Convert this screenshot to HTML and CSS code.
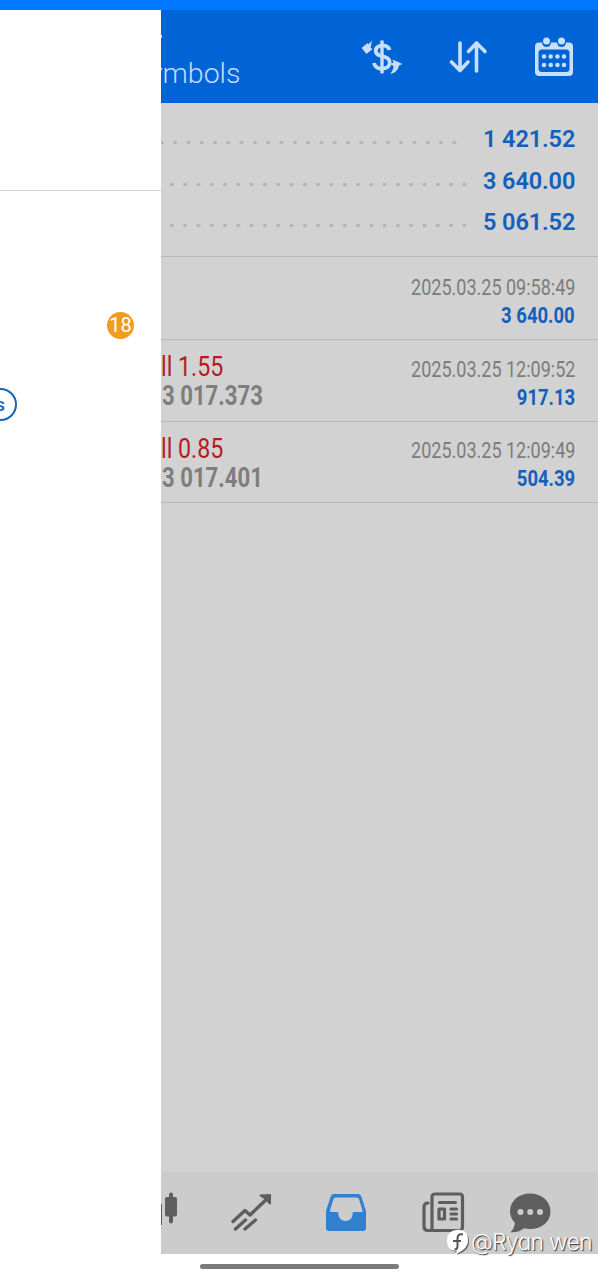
FILE: index.html
```html
<!DOCTYPE html>
<html lang="en">
<head>
<meta charset="utf-8">
<title>History</title>
<link rel="stylesheet" href="styles.css">
</head>
<body>
<div class="status"></div>
<div class="screen">
  <aside class="drawer">
    <div class="drawer-head"></div>
    <div class="drawer-item"><span class="count">18</span></div>
    <div class="drawer-item"><span class="pill">s</span></div>
  </aside>
  <main class="main">
    <header class="bar">
      <div class="title">ymbols</div>
      <div class="tick"></div>
      <svg class="tool" width="42" height="40" viewBox="0 0 42 40" fill="none" stroke="#c9def7" stroke-width="3.800">
        <path d="M28.500 13C27.500 9 23 7.500 19 8.800c-6 2-5.500 8.200 0 9.700l5 1.500c6.500 2 6 9.500 0 11.200-5 1.300-10-.2-11-5.200"/>
        <path d="M21 3.500v33" stroke-width="3.400"/>
        <path d="M0.500 11l6-5 .5 1.500L11.500 3.500C10 6 10.500 8 9.500 10.500l2 1.500-6 5zM41.500 27l-10-4.500 1 3-3 1.500 3 2c0 3-1 5-3.500 8 5-1 8-3.500 9-8.500z" fill="#c9def7" stroke="none"/>
      </svg>
      <svg class="tool" width="42" height="40" viewBox="0 0 42 40" fill="none" stroke="#c9def7" stroke-width="3.600" stroke-linecap="round" stroke-linejoin="round">
        <path d="M13 6v27M4.500 25l8.500 8.500 8-8.500M29.500 34V6M21.500 14.500L29.500 6l8.500 8.500"/>
      </svg>
      <svg class="tool" width="42" height="42" viewBox="0 0 42 42">
        <path d="M6 5.500h3c.5 3 2 4.500 4.500 4.500s4-1.500 4.500-4.500h6c.5 3 2 4.500 4.500 4.500s4-1.500 4.500-4.500h3q4 0 4 4v25.500q0 4-4 4H6q-4 0-4-4V9.500q0-4 4-4z" fill="#c9def7"/>
        <rect x="5.500" y="12.500" width="31" height="22.500" rx="3.500" fill="#0064d6"/>
        <g fill="#c9def7"><circle cx="13.500" cy="4" r="3.500"/><circle cx="28.500" cy="4" r="3.500"/>
        <circle cx="11" cy="19.500" r="2.300"/><circle cx="17.700" cy="19.500" r="2.300"/><circle cx="24.400" cy="19.500" r="2.300"/><circle cx="31" cy="19.500" r="2.300"/>
        <circle cx="11" cy="28" r="2.300"/><circle cx="17.700" cy="28" r="2.300"/><circle cx="24.400" cy="28" r="2.300"/><circle cx="31" cy="28" r="2.300"/></g>
      </svg>
    </header>
    <section class="totals">
      <div class="total"><i class="dots first"></i><b>1 421.52</b></div>
      <div class="total"><i class="dots second"></i><b>3 640.00</b></div>
      <div class="total"><i class="dots"></i><b>5 061.52</b></div>
    </section>
    <section class="deals">
      <article class="deal">
        <div class="left"></div>
        <div class="right"><span class="date">2025.03.25 09:58:49</span><span class="profit">3 640.00</span></div>
      </article>
      <article class="deal">
        <div class="left"><span class="side">ll 1.55</span><span class="price">3 017.373</span></div>
        <div class="right"><span class="date">2025.03.25 12:09:52</span><span class="profit">917.13</span></div>
      </article>
      <article class="deal">
        <div class="left"><span class="side">ll 0.85</span><span class="price">3 017.401</span></div>
        <div class="right"><span class="date">2025.03.25 12:09:49</span><span class="profit">504.39</span></div>
      </article>
    </section>
    <nav class="tabs">
      <svg class="candle" width="18" height="44" viewBox="0 0 18 44" fill="#5e5e5e">
        <path d="M0 14h1v21H0z"/><rect x="4" y="7" width="12" height="19.500" rx="2"/><rect x="8" y="2.500" width="4" height="31" rx="2"/>
      </svg>
      <svg class="trend" width="44" height="44" viewBox="0 0 44 44" fill="none" stroke="#5e5e5e" stroke-width="3.400" stroke-linecap="round" stroke-linejoin="round">
        <path d="M4 31.500L16 20.500l5 4.500L40.500 6.500M6.500 39L16.500 30M16 39l10.500-9"/><path d="M31.500 5.500l9.500-.5v8.500L37 9z" stroke-width="2" fill="#5e5e5e"/>
      </svg>
      <svg class="inbox" width="44" height="44" viewBox="0 0 44 44">
        <path d="M10 4h24q2.500 0 3.500 3l4.500 14v17q0 3-3 3H5q-3 0-3-3V21L6.500 7q1-3 3.500-3z" fill="#3280d0"/>
        <path d="M12 7.500h20.500q2 0 2.500 1.500l3.500 11.500q.500 1.500-1 1.500h-7.500q-1.500 0-1.500 2c0 4-3 7-7 7s-7-3-7-7q0-2-1.500-2H7q-1.500 0-1-1.500L9.500 9q.500-1.500 2.500-1.500z" fill="#ccc"/>
      </svg>
      <svg class="news" width="44" height="44" viewBox="0 0 44 44" fill="none" stroke="#5e5e5e" stroke-width="3.200" stroke-linecap="round" stroke-linejoin="round">
        <path d="M11 40.500h27q3.500 0 3.500-3.500V7q0-3-3-3H14q-3 0-3 3v33.500H7q-4 0-4-4V17q0-4 4-4"/><path d="M18.500 12.500h16M30 19h5.500M30 24h5.500M30 29h5.500"/><rect x="18" y="19" width="5.500" height="10"/>
      </svg>
      <svg class="chat" width="44" height="44" viewBox="0 0 44 44">
        <path d="M22 3.500c12 0 20.500 8 20.500 18S34 39 22 39c-2 0-4-.3-6-.8-3 2.500-7 4.300-13.500 4 3-3 4-6 4.500-9.200C4 30 2 26 2 21.500c0-10 8-18 20-18z" fill="#5e5e5e"/>
        <g fill="#ccc"><circle cx="12.500" cy="22" r="3"/><circle cx="22.200" cy="22" r="3"/><circle cx="32" cy="22" r="3"/></g>
      </svg>
    </nav>
  </main>
</div>
<footer class="gesture"><span class="handle"></span></footer>
<div class="mark">
  <svg width="24" height="26" viewBox="0 0 24 26">
    <path d="M11 2c7-1 11 3 11 9 0 8-5 11-12 14l1-3C4 22 1 18 1 12 1 6 5 2 11 2z" fill="#222" transform="translate(1 1)" opacity=".6"/>
    <path d="M11 1c7-1 11 3 11 10 0 7-5 11-12 14l1-3C4 22 1 18 1 12 1 5 5 1 11 1z" fill="#fff"/>
    <path d="M17 5.500c-4-1-5.500 1-5.500 4v8c0 2-1 3-3 3M7 12h8" fill="none" stroke="#555" stroke-width="2"/>
  </svg>
  <span class="author">@Ryan wen</span>
</div>
</body>
</html>
```
FILE: styles.css
```css
* { box-sizing: border-box; }
body {
  position: relative;
  margin: 0;
  width: 598px;
  height: 1280px;
  display: flex;
  flex-direction: column;
  overflow: hidden;
  background: #fff;
  font-family: Roboto, "Liberation Sans", sans-serif;
}
.status { height: 10px; background: #0078ff; flex: none; }
.screen { display: flex; height: 1244px; flex: none; }
.drawer { width: 161px; background: #fff; overflow: hidden; flex: none; }
.drawer-head { height: 181px; border-bottom: 1px solid #d4d4d4; }
.drawer-item { height: 80px; display: flex; align-items: center; justify-content: space-between; }
.drawer-item:nth-child(2) { margin-top: 94px; }
.count {
  margin-left: 107px;
  width: 27px;
  height: 27px;
  border-radius: 50%;
  background: #f09c20;
  color: #fff;
  font-size: 20px;
  line-height: 27px;
  text-align: center;
}
.pill {
  width: 60px;
  height: 33px;
  margin: -2px 0 0 -43px;
  padding-right: 10px;
  border: 2px solid #1464b8;
  border-radius: 17px;
  color: #1464b8;
  font-size: 19px;
  font-weight: 500;
  line-height: 30px;
  text-align: right;
}
.main { width: 437px; display: flex; flex-direction: column; background: #d2d2d2; overflow: hidden; }
.bar {
  position: relative;
  height: 93px;
  flex: none;
  display: flex;
  align-items: flex-start;
  gap: 44px;
  padding: 27px 23px 0 0;
  background: #0064d6;
}
.title {
  flex: 1;
  margin: 20px 0 0 -12px;
  color: #c2dafa;
  font-size: 28.5px;
  font-weight: 350;
  line-height: 34px;
}
.tick { position: absolute; left: 0; top: 25px; width: 1px; height: 3px; background: #c2dafa; }
.tool { flex: none; }
.totals { height: 154px; flex: none; padding: 16px 23px 0 0; border-bottom: 1px solid #b8b8b8; }
.total { display: flex; height: 41.5px; line-height: 41px; color: #1260be; font-size: 23.5px; }
.total b { width: 92px; text-align: right; font-weight: 600; white-space: nowrap; letter-spacing: -.1px; }
.dots {
  width: 314px;
  height: 5px;
  margin: 21px 8px 0 0;
  background: radial-gradient(circle at center, #b4b4b4 1.5px, transparent 2.1px) right 4px top / 13.3px 5px repeat-x;
}
.first { width: 303px; margin-right: 19px; background-position: right 3px top; }
.deals { flex: 1; }
.deal { display: flex; justify-content: space-between; height: 81.5px; padding: 12px 23px 0 0; border-bottom: 1px solid #b8b8b8; }
.deal:first-child { height: 83px; padding-top: 13px; }
.left, .right { display: flex; flex-direction: column; white-space: nowrap; }
.left { width: 150px; padding-top: 1px; }
.right { align-items: flex-end; padding-top: 2.5px; }
.left span { transform: scaleX(.82); transform-origin: left; font-size: 27px; line-height: 29px; }
.left .side { color: #b41c24; transform: scaleX(.86); }
.price { color: #7e7e7e; font-weight: 700; margin-left: 1px; }
.right span { transform: scaleX(.8); transform-origin: right; font-size: 22.5px; line-height: 28px; }
.date { color: #7c7c7c; }
.right .profit { color: #1260be; font-weight: 700; transform: scaleX(.82); }
.tabs { display: flex; height: 82px; flex: none; padding-top: 18px; background: #ccc; }
.trend { margin-left: 50px; }
.inbox { margin-left: 51px; }
.news { margin-left: 53px; }
.chat { margin-left: 43px; }
.gesture { height: 26px; display: flex; justify-content: center; padding-top: 10px; }
.handle { width: 199px; height: 5px; border-radius: 3px; background: #7b7b7b; }
.mark { position: absolute; left: 446px; top: 1228px; display: flex; align-items: center; gap: 1px; }
.author {
  color: #fff;
  font-family: Inter, "Noto Sans", sans-serif;
  font-feature-settings: "cv11";
  font-weight: 300;
  font-size: 22.5px;
  letter-spacing: -.5px;
  line-height: 28px;
  white-space: nowrap;
  text-shadow: 1px 1px 1px #333;
}
```
